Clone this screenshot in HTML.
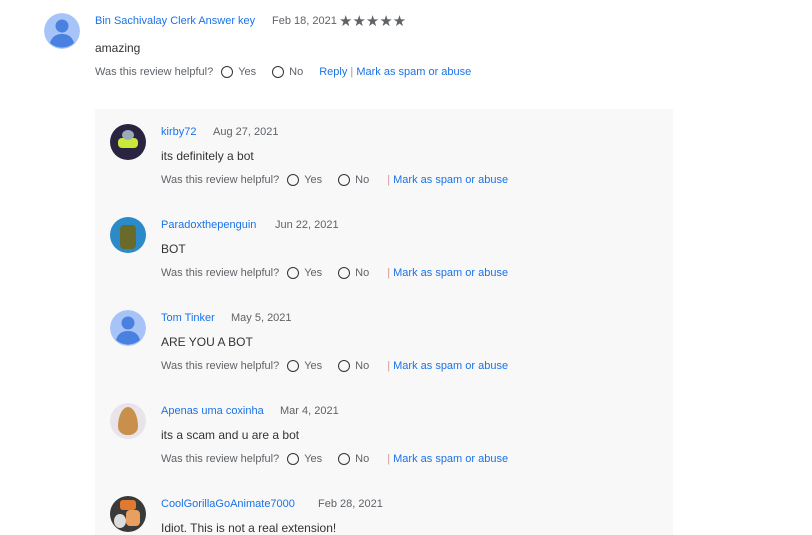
<!DOCTYPE html>
<html><head><meta charset="utf-8"><style>
body{margin:0;width:812px;height:535px;overflow:hidden;background:#fff;font-family:"Liberation Sans",Arial,sans-serif;position:relative}
.a{position:absolute;white-space:nowrap}
.n{font-size:11px;color:#1a73e8}
.d{font-size:11px;color:#5f6368}
.t{font-size:12px;color:#333}
.h{font-size:11px;color:#5f6368}
.l{color:#1a73e8}
.r{display:inline-block;width:10px;height:10px;border:1.3px solid #333;border-radius:50%;vertical-align:-3px;margin:0 5px 0 8px}
.box{position:absolute;left:95px;top:109px;width:578px;height:426px;background:#f8f8f8}
.av{position:absolute;width:36px;height:36px;border-radius:50%;overflow:hidden}
</style></head><body>
<svg class="av" style="left:44px;top:13px" viewBox="0 0 36 36"><circle cx="18" cy="18" r="18" fill="#a7c4f8"/><circle cx="18" cy="13" r="6.5" fill="#4a80e0"/><path d="M6 30c2-7 7-9 12-9s10 2 12 9a18 18 0 0 1-24 0z" fill="#4a80e0"/></svg>
<div class="a n" style="left:95px;top:15px">Bin Sachivalay Clerk Answer key</div>
<div class="a d" style="left:272px;top:15px">Feb 18, 2021</div>
<div class="a" style="left:339px;top:12px;font-size:15px;color:#5f6368;letter-spacing:0px">★★★★★</div>
<div class="a t" style="left:95px;top:41px">amazing</div>
<div class="a h" style="left:95px;top:66px">Was this review helpful?<span class="r"></span>Yes<span class="r" style="margin-left:16px"></span>No<span class="l" style="margin-left:16px">Reply</span> <span style="color:#999">|</span> <span class="l">Mark as spam or abuse</span></div>
<div class="box"></div>

<div class="av" style="left:110px;top:124px;background:#2a2440"><div style="position:absolute;left:8px;top:14px;width:20px;height:10px;background:#c8e83a;border-radius:4px"></div><div style="position:absolute;left:12px;top:6px;width:12px;height:10px;background:#9ab;border-radius:50%"></div></div>
<div class="av" style="left:110px;top:217px;background:#2b8ac8"><div style="position:absolute;left:10px;top:8px;width:16px;height:24px;background:#6a6a2a;border-radius:4px"></div></div>
<svg class="av" style="left:110px;top:310px" viewBox="0 0 36 36"><circle cx="18" cy="18" r="18" fill="#a7c4f8"/><circle cx="18" cy="13" r="6.5" fill="#4a80e0"/><path d="M6 30c2-7 7-9 12-9s10 2 12 9a18 18 0 0 1-24 0z" fill="#4a80e0"/></svg>
<div class="av" style="left:110px;top:403px;background:#e8e4ea"><div style="position:absolute;left:8px;top:4px;width:20px;height:28px;background:#c8904a;border-radius:50% 50% 45% 45%/70% 70% 30% 30%"></div></div>
<div class="av" style="left:110px;top:496px;background:#3a3a3a"><div style="position:absolute;left:10px;top:4px;width:16px;height:10px;background:#e07a30;border-radius:3px"></div><div style="position:absolute;left:4px;top:18px;width:12px;height:14px;background:#ddd;border-radius:50%"></div><div style="position:absolute;left:16px;top:14px;width:14px;height:16px;background:#e8a060;border-radius:4px"></div></div>

<div class="a n" style="left:161px;top:126px">kirby72</div><div class="a d" style="left:213px;top:126px">Aug 27, 2021</div>
<div class="a t" style="left:161px;top:149px">its definitely a bot</div>
<div class="a h" style="left:161px;top:174px">Was this review helpful?<span class="r"></span>Yes<span class="r" style="margin-left:16px"></span>No<span style="color:#c99;margin-left:18px">|</span> <span class="l">Mark as spam or abuse</span></div>

<div class="a n" style="left:161px;top:219px">Paradoxthepenguin</div><div class="a d" style="left:275px;top:219px">Jun 22, 2021</div>
<div class="a t" style="left:161px;top:242px">BOT</div>
<div class="a h" style="left:161px;top:267px">Was this review helpful?<span class="r"></span>Yes<span class="r" style="margin-left:16px"></span>No<span style="color:#c99;margin-left:18px">|</span> <span class="l">Mark as spam or abuse</span></div>

<div class="a n" style="left:161px;top:312px">Tom Tinker</div><div class="a d" style="left:231px;top:312px">May 5, 2021</div>
<div class="a t" style="left:161px;top:335px">ARE YOU A BOT</div>
<div class="a h" style="left:161px;top:360px">Was this review helpful?<span class="r"></span>Yes<span class="r" style="margin-left:16px"></span>No<span style="color:#c99;margin-left:18px">|</span> <span class="l">Mark as spam or abuse</span></div>

<div class="a n" style="left:161px;top:405px">Apenas uma coxinha</div><div class="a d" style="left:280px;top:405px">Mar 4, 2021</div>
<div class="a t" style="left:161px;top:428px">its a scam and u are a bot</div>
<div class="a h" style="left:161px;top:453px">Was this review helpful?<span class="r"></span>Yes<span class="r" style="margin-left:16px"></span>No<span style="color:#c99;margin-left:18px">|</span> <span class="l">Mark as spam or abuse</span></div>

<div class="a n" style="left:161px;top:498px">CoolGorillaGoAnimate7000</div><div class="a d" style="left:318px;top:498px">Feb 28, 2021</div>
<div class="a t" style="left:161px;top:521px">Idiot. This is not a real extension!</div>
</body></html>
